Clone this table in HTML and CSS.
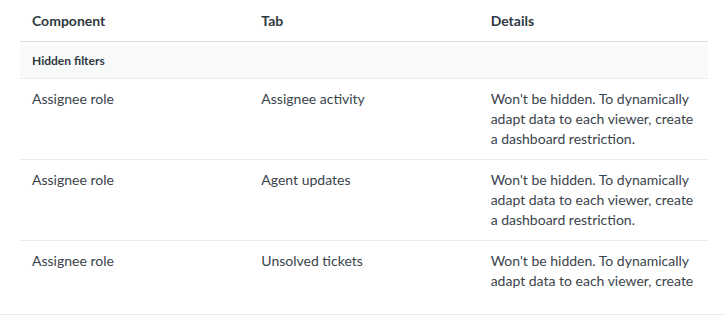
FILE: index.html
```html
<!DOCTYPE html>
<html>
<head>
  <title>Hidden components</title>
  <link rel="stylesheet" href="styles.css">
</head>
<body>
  <div class="panel">
    <div class="table-wrap">
      <table class="components-table">
        <thead>
          <tr>
            <th>Component</th>
            <th>Tab</th>
            <th>Details</th>
          </tr>
        </thead>
        <tbody>
          <tr class="group-row">
            <td colspan="3">Hidden filters</td>
          </tr>
          <tr>
            <td>Assignee role</td>
            <td>Assignee activity</td>
            <td>Won't be hidden. To dynamically adapt data to each viewer, create a dashboard restriction.</td>
          </tr>
          <tr>
            <td>Assignee role</td>
            <td>Agent updates</td>
            <td>Won't be hidden. To dynamically adapt data to each viewer, create a dashboard restriction.</td>
          </tr>
          <tr>
            <td>Assignee role</td>
            <td>Unsolved tickets</td>
            <td>Won't be hidden. To dynamically adapt data to each viewer, create a dashboard restriction.</td>
          </tr>
        </tbody>
      </table>
    </div>
  </div>
</body>
</html>
```

FILE: styles.css
```css
body {
  margin: 0;
  font-family: Lato, "Open Sans", sans-serif;
  background-color: #fff;
  color: #2f3941;
}

.panel {
  height: 314px;
  border-bottom: 1px solid #e9ebed;
}

.table-wrap {
  height: 291px;
  overflow: hidden;
  padding: 0 18px 0 20px;
}

.components-table {
  width: 100%;
  border-collapse: separate;
  border-spacing: 0;
  table-layout: fixed;
  font-size: 14px;
  line-height: 20px;
}

.components-table th,
.components-table td {
  width: 33.33%;
  padding: 10px 12px;
  text-align: left;
  vertical-align: top;
}

.components-table th {
  font-weight: 700;
  padding-top: 11px;
  border-bottom: 1px solid #d8dcde;
}

.components-table td {
  color: #3a444c;
  border-bottom: 1px solid #e9ebed;
}

/* Строка группы */
.components-table .group-row td {
  color: #2f3941;
  font-size: 12px;
  font-weight: 700;
  line-height: 16px;
  padding: 8px 12px 9px;
  background-color: #f8f9f9;
  border-top: 3px solid #fff;
}
```
